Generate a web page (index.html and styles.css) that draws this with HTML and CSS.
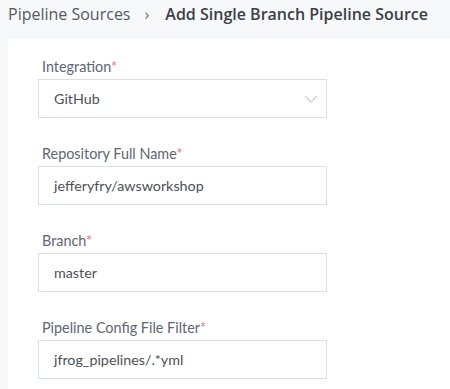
FILE: index.html
```html
<!DOCTYPE html>
<html lang="en">
<head>
    <meta charset="UTF-8">
    <title>Add Single Branch Pipeline Source</title>
    <link rel="stylesheet" href="styles.css">
</head>
<body>
    <nav class="breadcrumb">
        <span class="crumb">Pipeline Sources</span>
        <span class="sep">&#x203A;</span>
        <span class="crumb current">Add Single Branch Pipeline Source</span>
    </nav>

    <div class="card">
        <div class="field">
            <label>Integration<span class="req">*</span></label>
            <div class="input select">
                <span>GitHub</span>
                <svg width="14" height="8" viewBox="0 0 14 8"><path d="M1 1l6 6 6-6" fill="none" stroke="#c9ccd3" stroke-width="1.2"/></svg>
            </div>
        </div>
        <div class="field">
            <label>Repository Full Name<span class="req">*</span></label>
            <div class="input">jefferyfry/awsworkshop</div>
        </div>
        <div class="field">
            <label>Branch<span class="req">*</span></label>
            <div class="input">master</div>
        </div>
        <div class="field">
            <label>Pipeline Config File Filter<span class="req">*</span></label>
            <div class="input">jfrog_pipelines/.*yml</div>
        </div>
    </div>
</body>
</html>
```

FILE: styles.css
```css
* {
    margin: 0;
    padding: 0;
    box-sizing: border-box;
}

body {
    background: #f7f8fa;
    font-family: 'Lato', sans-serif;
    padding-left: 8px;
}

.breadcrumb {
    font-family: 'Open Sans', sans-serif;
    font-size: 16px;
    height: 39px;
    padding-top: 3px;
    display: flex;
    align-items: flex-start;
    color: #555a60;
    white-space: nowrap;
}

.sep {
    margin: 0 16px 0 14px;
    color: #6b7078;
}

.current {
    font-weight: 600;
    color: #3c3f44;
}

.card {
    background: #ffffff;
    padding: 19px 30px 10px;
}

.field {
    width: 289px;
    margin-bottom: 27px;
}

.field:last-child {
    margin-bottom: 0;
}

label {
    display: block;
    font-size: 14.4px;
    line-height: 18px;
    margin-bottom: 3px;
    padding-left: 4px;
    color: #5f6673;
}

.req {
    color: #f27474;
}

.input {
    height: 39px;
    border: 1px solid #dcdee5;
    padding: 0 15px;
    display: flex;
    align-items: center;
    font-size: 14.3px;
    color: #4d5056;
}

.select {
    justify-content: space-between;
    padding-right: 8px;
}
```
